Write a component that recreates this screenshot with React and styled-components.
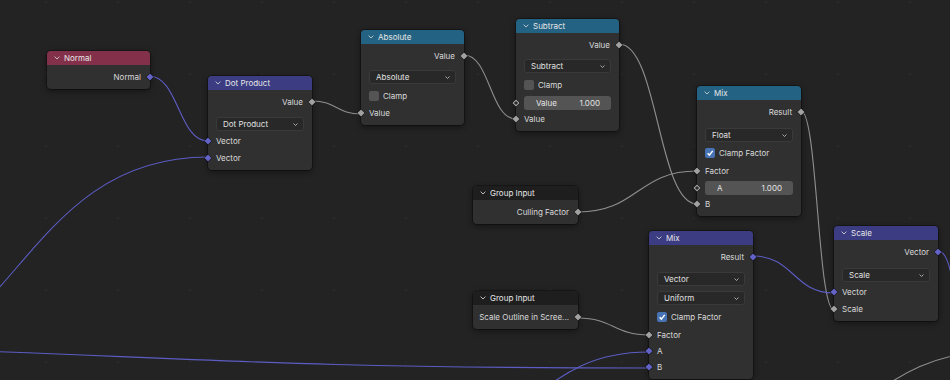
import React from 'react';
import styled, { createGlobalStyle } from 'styled-components';

const GlobalStyle = createGlobalStyle`
  html, body {
    margin: 0;
    padding: 0;
    background: #232323;
  }
  body {
    font-family: Inter, "DejaVu Sans", sans-serif;
  }
`;

const Canvas = styled.div`
  position: relative;
  width: 950px;
  height: 380px;
  overflow: hidden;
  background-color: #232323;
  background-image: radial-gradient(circle, #292929 0.8px, transparent 1.2px);
  background-size: 72px 72px;
  background-position: 10px 38px;
`;

const WireLayer = styled.svg`
  position: absolute;
  left: 0;
  top: 0;
  width: 950px;
  height: 380px;
`;

const Node = styled.div`
  position: absolute;
  left: ${(p) => p.$x}px;
  top: ${(p) => p.$y}px;
  width: ${(p) => p.$w}px;
  background: #303030;
  border-radius: 4px;
  box-shadow: 0 0 0 1px rgba(0, 0, 0, 0.3), 0 2px 6px rgba(0, 0, 0, 0.45);
  font-size: 8px;
  color: #dadada;
`;

const Header = styled.div`
  height: 14px;
  display: flex;
  align-items: center;
  gap: 4px;
  padding-left: 7px;
  background: ${(p) => p.$color};
  border-radius: 4px 4px 0 0;
  color: #e6e6e6;
`;

const Body = styled.div`
  display: flex;
  flex-direction: column;
  padding: 3px 0 4px;
`;

const Row = styled.div`
  position: relative;
  height: ${(p) => (p.$out ? 17 : 16)}px;
  margin-top: ${(p) => p.$mt || 0}px;
  display: flex;
  align-items: center;
  justify-content: ${(p) => (p.$out ? 'flex-end' : 'flex-start')};
  padding: ${(p) => (p.$out ? '0 9px 0 0' : '0 0 0 8px')};
  white-space: nowrap;
`;

const Socket = styled.span`
  position: absolute;
  top: 50%;
  left: ${(p) => (p.$side === 'right' ? '100%' : '0')};
  box-sizing: border-box;
  width: 5px;
  height: 5px;
  transform: translate(-50%, -50%) rotate(45deg);
  background: ${(p) => (p.$hollow ? '#2a2a2a' : p.$kind === 'vec' ? '#6363c7' : '#a1a1a1')};
  border: ${(p) => (p.$hollow ? '1px solid #a8a8a8' : 'none')};
  box-shadow: 0 0 0 0.5px rgba(0, 0, 0, 0.6);
`;

const Select = styled.div`
  height: 14px;
  margin: ${(p) => p.$mt ?? 7}px 8px 0;
  box-sizing: border-box;
  display: flex;
  align-items: center;
  justify-content: space-between;
  padding: 0 5px 0 6px;
  background: #282828;
  border: 1px solid #3a3a3a;
  border-radius: 3px;
  color: #e0e0e0;
`;

const CheckRow = styled.div`
  height: 17px;
  margin-top: ${(p) => p.$mt ?? 3}px;
  display: flex;
  align-items: center;
  gap: 4px;
  padding-left: 8px;
`;

const Box = styled.span`
  width: 10px;
  height: 10px;
  border-radius: 2px;
  background: ${(p) => (p.$on ? '#4772b3' : '#545454')};
  display: flex;
  align-items: center;
  justify-content: center;
`;

const FieldRow = styled.div`
  position: relative;
  margin-top: ${(p) => p.$mt ?? 1}px;
  padding: 0 8px;
`;

const Field = styled.div`
  height: 14px;
  display: flex;
  align-items: center;
  justify-content: space-between;
  padding: 0 11px 0 12px;
  background: #545454;
  border-radius: 3px;
  color: #e4e4e4;
`;

const Chevron = ({ w = 6, color = '#cfcfcf' }) => (
  <svg width={w} height={w * 0.6} viewBox="0 0 10 6">
    <polyline points="1,1 5,5 9,1" fill="none" stroke={color} strokeWidth="1.5" />
  </svg>
);

const Tick = () => (
  <svg width="8" height="8" viewBox="0 0 10 10">
    <polyline points="2,5.2 4.2,7.6 8.4,2.4" fill="none" stroke="#fff" strokeWidth="1.8" />
  </svg>
);

const NODES = [
  {
    id: 'normal', title: 'Normal', color: '#83314a', x: 47, y: 51, w: 103,
    rows: [{ t: 'out', label: 'Normal', s: 'vec' }],
  },
  {
    id: 'dot', title: 'Dot Product', color: '#3c3c83', x: 208, y: 76, w: 104,
    rows: [
      { t: 'out', label: 'Value', s: 'float' },
      { t: 'select', label: 'Dot Product' },
      { t: 'in', label: 'Vector', s: 'vec', mt: 2 },
      { t: 'in', label: 'Vector', s: 'vec', mt: 1 },
    ],
  },
  {
    id: 'abs', title: 'Absolute', color: '#246283', x: 361, y: 30, w: 103,
    rows: [
      { t: 'out', label: 'Value', s: 'float' },
      { t: 'select', label: 'Absolute', mt: 6 },
      { t: 'check', label: 'Clamp' },
      { t: 'in', label: 'Value', s: 'float', mt: 1 },
    ],
  },
  {
    id: 'sub', title: 'Subtract', color: '#246283', x: 516, y: 19, w: 103,
    rows: [
      { t: 'out', label: 'Value', s: 'float' },
      { t: 'select', label: 'Subtract', mt: 6 },
      { t: 'check', label: 'Clamp' },
      { t: 'field', label: 'Value', value: '1.000', mt: 3 },
      { t: 'in', label: 'Value', s: 'float', mt: 1 },
    ],
  },
  {
    id: 'mix1', title: 'Mix', color: '#246283', x: 697, y: 86, w: 104,
    rows: [
      { t: 'out', label: 'Result', s: 'float' },
      { t: 'select', label: 'Float', mt: 8 },
      { t: 'check', label: 'Clamp Factor', on: true, mt: 2 },
      { t: 'in', label: 'Factor', s: 'float', mt: 2 },
      { t: 'field', label: 'A', value: '1.000', mt: 2 },
      { t: 'in', label: 'B', s: 'float', mt: 1 },
    ],
  },
  {
    id: 'gi1', title: 'Group Input', color: '#1e1e1e', x: 473, y: 186, w: 105,
    rows: [{ t: 'out', label: 'Culling Factor', s: 'float' }],
  },
  {
    id: 'mix2', title: 'Mix', color: '#3c3c83', x: 649, y: 231, w: 104,
    rows: [
      { t: 'out', label: 'Result', s: 'vec' },
      { t: 'select', label: 'Vector', mt: 7 },
      { t: 'select', label: 'Uniform', mt: 5 },
      { t: 'check', label: 'Clamp Factor', on: true },
      { t: 'in', label: 'Factor', s: 'float', mt: 2 },
      { t: 'in', label: 'A', s: 'vec' },
      { t: 'in', label: 'B', s: 'vec' },
    ],
  },
  {
    id: 'gi2', title: 'Group Input', color: '#1e1e1e', x: 473, y: 291, w: 105,
    rows: [{ t: 'out', label: 'Scale Outline in Scree...', s: 'float' }],
  },
  {
    id: 'scale', title: 'Scale', color: '#3c3c83', x: 834, y: 226, w: 104,
    rows: [
      { t: 'out', label: 'Vector', s: 'vec' },
      { t: 'select', label: 'Scale', mt: 8 },
      { t: 'in', label: 'Vector', s: 'vec', mt: 2 },
      { t: 'in', label: 'Scale', s: 'float', mt: 1 },
    ],
  },
];

// bezier link with horizontal handles, half the x distance long
const link = (x1, y1, x2, y2) => {
  const h = Math.abs(x2 - x1) * 0.5;
  return `M${x1},${y1} C${x1 + h},${y1} ${x2 - h},${y2} ${x2},${y2}`;
};

const GRAY = '#8f8f8f';
const PURPLE = '#5c5cc4';

const WIRES = [
  { d: link(149, 76, 208, 141), c: PURPLE },
  { d: link(-178, 382, 208, 157), c: PURPLE },
  { d: link(312, 101, 361, 114), c: GRAY },
  { d: link(464, 55, 516, 119), c: GRAY },
  { d: link(619, 44, 697, 204), c: GRAY },
  { d: link(578, 212, 697, 171), c: GRAY },
  { d: link(801, 111, 834, 310), c: GRAY },
  { d: link(753, 256, 834, 293), c: PURPLE },
  { d: 'M938,251 C968,251 950,470 985,470', c: PURPLE },
  { d: link(578, 318, 649, 335), c: GRAY },
  { d: 'M-420,345 C120,345 120,368 649,368', c: PURPLE },
  { d: 'M420,440 C535,440 535,352 649,352', c: PURPLE },
  { d: 'M730,450 C865,450 865,351 1000,351', c: GRAY },
];

const NodeRow = ({ row }) => {
  switch (row.t) {
    case 'out':
      return (
        <Row $out $mt={row.mt}>
          {row.label}
          <Socket $side="right" $kind={row.s} />
        </Row>
      );
    case 'in':
      return (
        <Row $mt={row.mt}>
          <Socket $side="left" $kind={row.s} />
          {row.label}
        </Row>
      );
    case 'select':
      return (
        <Select $mt={row.mt}>
          <span>{row.label}</span>
          <Chevron w={5} />
        </Select>
      );
    case 'check':
      return (
        <CheckRow $mt={row.mt}>
          <Box $on={row.on}>{row.on && <Tick />}</Box>
          <span>{row.label}</span>
        </CheckRow>
      );
    case 'field':
      return (
        <FieldRow $mt={row.mt}>
          <Socket $side="left" $hollow />
          <Field>
            <span>{row.label}</span>
            <span>{row.value}</span>
          </Field>
        </FieldRow>
      );
    default:
      return null;
  }
};

const App = () => (
  <>
    <GlobalStyle />
    <Canvas>
      <WireLayer viewBox="0 0 950 380">
        {WIRES.map((w, i) => (
          <path key={i} d={w.d} fill="none" stroke={w.c} strokeWidth="1.1" />
        ))}
      </WireLayer>
      {NODES.map((n) => (
        <Node key={n.id} $x={n.x} $y={n.y} $w={n.w}>
          <Header $color={n.color}>
            <Chevron />
            <span>{n.title}</span>
          </Header>
          <Body>
            {n.rows.map((r, i) => (
              <NodeRow key={i} row={r} />
            ))}
          </Body>
        </Node>
      ))}
    </Canvas>
  </>
);

export default App;
